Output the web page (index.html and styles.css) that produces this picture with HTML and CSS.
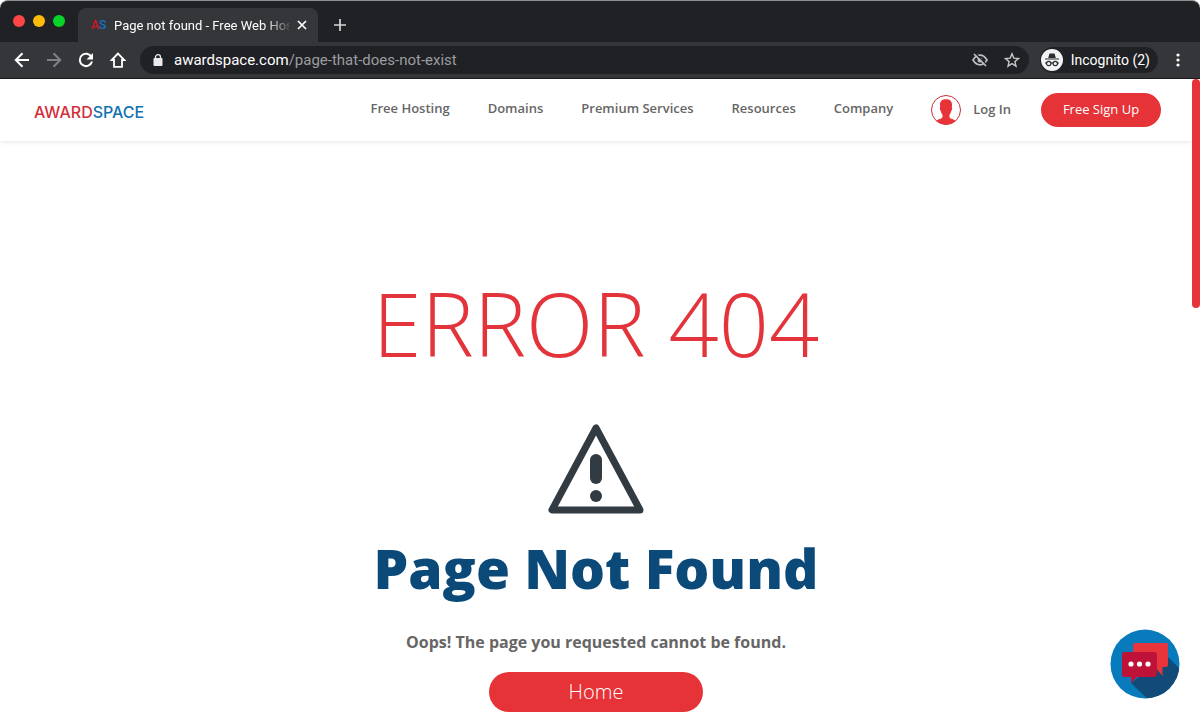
FILE: index.html
```html
<!DOCTYPE html>
<html lang="en">
<head>
<meta charset="utf-8">
<title>Page not found - Free Web Hosting</title>
<link rel="stylesheet" href="styles.css">
</head>
<body>
<div class="browser">
  <div class="tabbar">
    <div class="lights"><button class="light close" aria-label="Close window"></button><button class="light min" aria-label="Minimize"></button><button class="light max" aria-label="Zoom"></button></div>
    <div class="tab">
      <span class="favicon"><span class="fav-a">A</span><span class="fav-s">S</span></span>
      <span class="tab-title">Page not found - Free Web Hos</span>
      <button class="icon-btn tab-close" aria-label="Close tab"><svg width="10" height="10" viewBox="0 0 10 10"><path d="M1 1l8 8M9 1l-8 8" stroke="#fff" stroke-width="1.7"/></svg></button>
    </div>
    <button class="icon-btn new-tab" aria-label="New tab"><svg width="12" height="12" viewBox="0 0 12 12"><path d="M6 0v12M0 6h12" stroke="#d5d6d8" stroke-width="1.7"/></svg></button>
  </div>
  <div class="toolbar">
    <div class="nav-buttons">
      <button class="icon-btn" aria-label="Back"><svg width="16" height="16" viewBox="0 0 16 16"><path d="M15 8H2M8.500 1.300L1.800 8l6.700 6.700" fill="none" stroke="#fff" stroke-width="2"/></svg></button>
      <button class="icon-btn" aria-label="Forward"><svg width="16" height="16" viewBox="0 0 16 16"><path d="M1 8H14M7.500 1.300L14.200 8l-6.700 6.700" fill="none" stroke="#808184" stroke-width="2"/></svg></button>
      <button class="icon-btn" aria-label="Reload"><svg width="16" height="16" viewBox="0 0 16 16"><path d="M13.500 5A6.200 6.200 0 1 0 14 9.500" fill="none" stroke="#fff" stroke-width="2"/><path d="M15 1v6.500H8.500z" fill="#fff"/></svg></button>
      <button class="icon-btn" aria-label="Home"><svg width="16" height="16" viewBox="0 0 16 16"><path d="M8 1.500L1.700 8H4v6.800h8V8h2.300z" fill="none" stroke="#fff" stroke-width="1.800"/></svg></button>
    </div>
    <div class="omnibox">
      <svg class="lock" width="10" height="12" viewBox="0 0 10 12"><rect x=".5" y="4" width="9" height="8" rx="1" fill="#e8eaed"/><path d="M2.500 5V3a2.500 2.300 0 0 1 5 0v2" fill="none" stroke="#e8eaed" stroke-width="1.300"/></svg>
      <span class="url"><span class="host">awardspace.com</span>/page-that-does-not-exist</span>
      <button class="icon-btn" aria-label="Cookies blocked"><svg width="16" height="16" viewBox="0 0 16 16"><path d="M1 8q3-4.800 7-4.800T15 8q-3 4.800-7 4.800T1 8z" fill="none" stroke="#bdbec1" stroke-width="1.700"/><circle cx="8" cy="8" r="2.500" fill="#bdbec1"/><path d="M3.500 1.500l12 12" stroke="#202124" stroke-width="1.500"/><path d="M2 2l12 12" stroke="#bdbec1" stroke-width="1.700"/></svg></button>
      <button class="icon-btn" aria-label="Bookmark"><svg width="16" height="16" viewBox="0 0 16 16"><path d="M8 1.800l1.800 4.300 4.700.4-3.600 3.100 1.100 4.600L8 11.700l-4 2.500 1.100-4.600L1.500 6.500l4.700-.4z" fill="none" stroke="#c6c7ca" stroke-width="1.400"/></svg></button>
    </div>
    <div class="incognito">
      <svg width="22" height="22" viewBox="0 0 22 22"><circle cx="11" cy="11" r="11" fill="#f1f3f4"/><path d="M7.200 9l1.300-4.500h5L14.800 9zM4 9.400h14v1.200H4z" fill="#2b2c30"/><g fill="none" stroke="#2b2c30" stroke-width="1.200"><circle cx="7.700" cy="14.500" r="2.200"/><circle cx="14.300" cy="14.500" r="2.200"/><path d="M9.900 14.300q1.100-.7 2.200 0M4 14h1.500M16.500 14H18"/></g></svg>
      <span>Incognito (2)</span>
    </div>
    <button class="icon-btn" aria-label="Menu"><svg width="16" height="16" viewBox="0 0 16 16" fill="#fff"><circle cx="8" cy="3" r="1.600"/><circle cx="8" cy="8" r="1.600"/><circle cx="8" cy="13" r="1.600"/></svg></button>
  </div>
</div>
<div class="viewport">
  <div class="page">
    <header class="site-header">
      <a class="logo" href="#" aria-label="AwardSpace"><span class="logo-award">AWARD</span><span class="logo-space">SPACE</span></a>
      <nav class="site-nav">
        <a href="#">Free Hosting</a><a href="#">Domains</a><a href="#">Premium Services</a><a href="#">Resources</a><a href="#">Company</a>
      </nav>
      <a class="login" href="#"><svg width="30" height="30" viewBox="0 0 30 30"><circle cx="15" cy="15" r="14.500" fill="#fff" stroke="#c9303a"/><path d="M15 4.200c-4.200 0-6.300 2-6 6.500l.2 1.600c-.8.300-.3 3.200.6 3.600.3 1.700.9 3 1.700 3.900v2.500c-.6 1.700-4.300 1.700-6.200 3.500a14.500 14.500 0 0 0 19.400 0c-1.900-1.800-5.600-1.800-6.200-3.500v-2.500c.8-.9 1.400-2.200 1.700-3.900.9-.4 1.400-3.300.6-3.600l.2-1.600c.3-4.500-1.800-6.500-6-6.500z" fill="#e83338"/></svg><span class="login-text">Log In</span></a>
      <a class="signup" href="#">Free Sign Up</a>
    </header>
    <main class="error">
      <h1>ERROR 404</h1>
      <svg class="warning" width="96" height="92" viewBox="0 0 96 92"><path d="M48 5L4 87h88z" fill="none" stroke="#323a42" stroke-width="7" stroke-linejoin="round"/><rect x="42" y="31" width="12" height="30" rx="6" fill="#323a42"/><circle cx="48" cy="73" r="6" fill="#323a42"/></svg>
      <h2>Page Not Found</h2>
      <p>Oops! The page you requested cannot be found.</p>
      <a class="home" href="#">Home</a>
    </main>
  </div>
  <div class="scrollbar"><div class="thumb"></div></div>
</div>
<button class="chat" aria-label="Chat"><svg width="70" height="70" viewBox="0 0 70 70"><defs><clipPath id="disc"><circle cx="35" cy="35" r="34.500"/></clipPath></defs><g clip-path="url(#disc)"><path fill="#087bbd" d="M0 0h70v70H0z"/><path fill="#124a78" d="M57 27l26 26v30H51L21 54l19-14z"/></g><path fill="#e8343b" d="M25 14h31q2 0 2 2v20q0 2-2 2h-3.500v9L45 38H25q-2 0-2-2V16q0-2 2-2z"/><path fill="#be1238" d="M14 23h30q3 0 3 3v19q0 3-3 3H27l-6 6v-6h-7q-2 0-2-2V25q0-2 2-2z"/><g fill="#fff"><circle cx="21" cy="35" r="2.600"/><circle cx="29.500" cy="35" r="2.600"/><circle cx="38" cy="35" r="2.600"/></g></svg></button>
</body>
</html>
```
FILE: styles.css
```css
* { box-sizing: border-box; }
body {
  margin: 0;
  min-height: 100vh;
  display: flex;
  flex-direction: column;
  background: #fff;
  font-family: "Open Sans", sans-serif;
  color: #666;
}
a { color: inherit; text-decoration: none; }
button { border: 0; padding: 0; background: none; }
svg { display: block; flex: none; }
.icon-btn { display: flex; align-items: center; justify-content: center; flex: none; }

.browser {
  background: #202124;
  border-top: 1px solid #8b9192;
  border-radius: 8px 8px 0 0;
  font-family: Roboto, sans-serif;
  color: #fff;
}
.tabbar { display: flex; align-items: flex-end; height: 41px; }
.lights { display: flex; gap: 8px; align-self: center; margin-left: 13px; padding-bottom: 2px; width: 65px; }
.light { width: 12px; height: 12px; border-radius: 50%; }
.close { background: #ff4646; }
.min { background: #fdbc0a; }
.max { background: #08d328; }
.tab {
  display: flex;
  align-items: center;
  width: 240px;
  height: 34px;
  padding: 0 11px 0 13px;
  background: #35363a;
  border-radius: 8px 8px 0 0;
}
.favicon { flex: none; font: 500 12px Roboto, sans-serif; width: 23px; }
.fav-a { color: #d5141f; }
.fav-s { color: #1670c4; }
.tab-title {
  flex: 1;
  min-width: 0;
  white-space: nowrap;
  font-size: 13px;
  mask-image: linear-gradient(to right, #000 150px, transparent 180px);
}
.tab-close { margin-left: 8px; }
.new-tab { height: 34px; margin-left: 16px; }
.toolbar {
  display: flex;
  align-items: center;
  height: 37px;
  padding: 0 14px;
  background: #35363a;
  border-bottom: 1px solid #1b1c1f;
}
.nav-buttons { display: flex; align-items: center; gap: 16px; width: 126px; }
.omnibox {
  flex: 1;
  display: flex;
  align-items: center;
  gap: 16px;
  height: 28px;
  padding: 0 9px 0 13px;
  border-radius: 14px;
  background: #202124;
}
.lock { margin-right: -5px; }
.url { flex: 1; font-size: 15px; color: #9b9da1; }
.host { color: #fff; }
.incognito {
  display: flex;
  align-items: center;
  gap: 8px;
  height: 26px;
  margin: 0 12px 0 11px;
  padding: 0 8px 0 1px;
  border-radius: 13px;
  background: #202124;
  font-size: 14px;
}

.viewport { flex: 1; display: flex; }
.page { flex: 1; }
.site-header {
  display: flex;
  align-items: center;
  height: 62px;
  padding: 0 31px 0 34px;
  font-size: 13px;
  box-shadow: 0 1px 4px rgba(0, 0, 0, .1);
}
.logo { margin-right: auto; padding-top: 3px; font: 500 16px Inter, sans-serif; }
.logo-award { color: #d2303b; }
.logo-space { color: #1272b0; }
.site-nav { display: flex; gap: 38px; font-weight: 600; padding-bottom: 4px; }
.login { display: flex; align-items: center; gap: 12px; margin: 0 30px 0 38px; font-weight: 600; }
.login-text { padding-bottom: 2px; }
.signup {
  height: 34px;
  width: 120px;
  line-height: 32px;
  border-radius: 17px;
  background: #e63338;
  color: #fff;
  text-align: center;
}
.error { display: flex; flex-direction: column; align-items: center; padding-top: 122px; }
h1 { margin: 0; font-size: 88px; line-height: 120px; font-weight: 300; color: #e2343a; }
.warning { margin-top: 40px; }
h2 { margin: 13px 0 0; font-size: 55px; line-height: 80px; font-weight: 800; color: #0b4a78; }
p { margin: 22px 0 0; font-size: 16px; line-height: 24px; font-weight: 700; }
.home {
  width: 214px;
  margin-top: 18px;
  border-radius: 20px;
  background: #e63338;
  color: #fff;
  font-size: 20px;
  font-weight: 300;
  line-height: 40px;
  text-align: center;
}
.scrollbar { width: 8px; }
.thumb { height: 229px; border-radius: 4px; background: #e63338; }
.chat { position: fixed; right: 20px; bottom: 25px; width: 70px; height: 70px; }
```
